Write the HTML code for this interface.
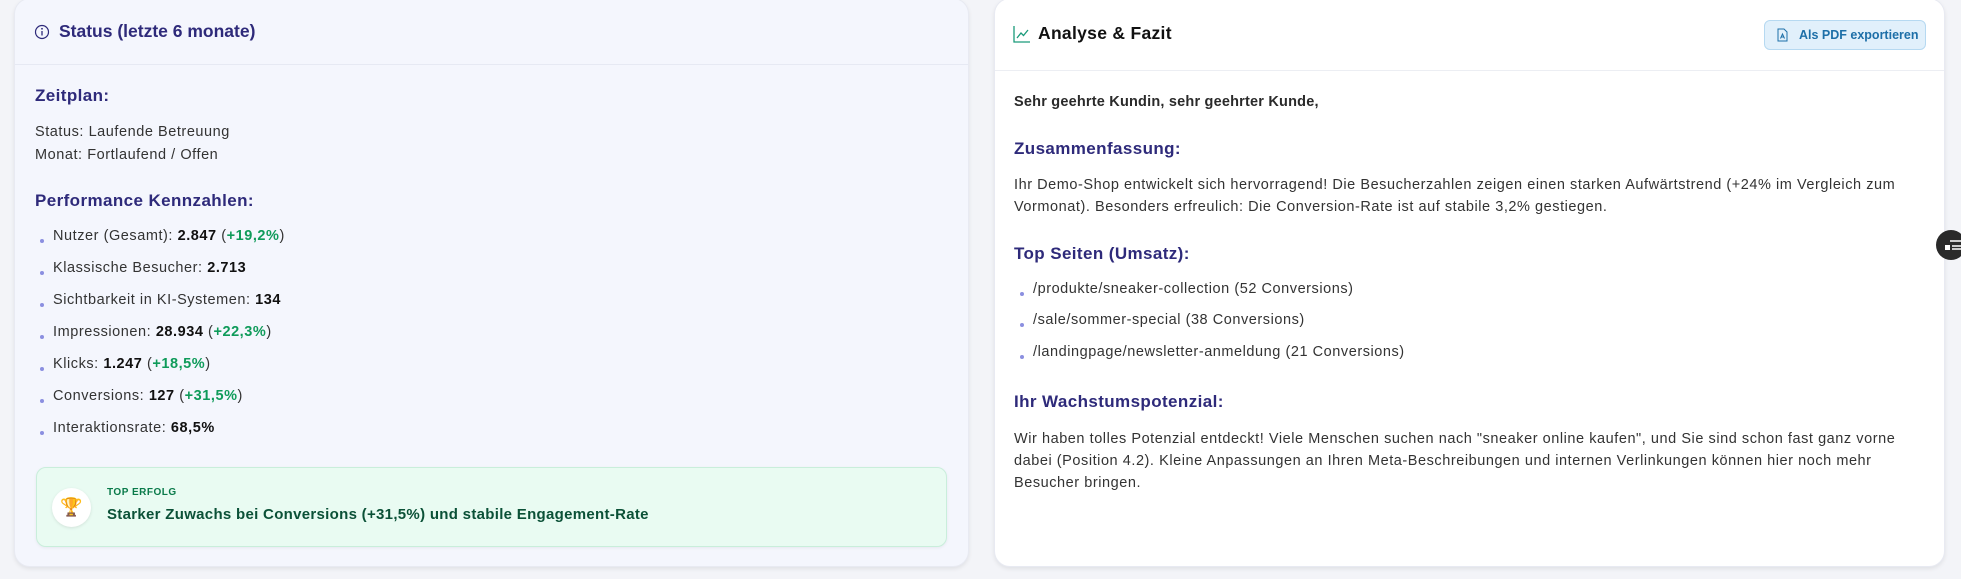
<!DOCTYPE html>
<html><head><meta charset="utf-8"><style>
*{margin:0;padding:0;box-sizing:border-box}
body{width:1961px;height:579px;background:#f3f4f8;font-family:"Liberation Sans",sans-serif;position:relative;overflow:hidden;color:#333}
.card{position:absolute;border-radius:16px;box-shadow:0 2px 4px rgba(0,0,0,.08);border:1px solid #e8eaf2}
.a{position:absolute;white-space:nowrap;line-height:20px}
.h{font-weight:bold;color:#2e2a7a;font-size:17px;letter-spacing:.4px}
.t{font-size:14.5px;letter-spacing:.55px;color:#333}
.b{font-weight:bold;color:#111}
.g{font-weight:bold;color:#0f9b5a}
.dot{position:absolute;width:4px;height:4px;border-radius:50%;background:#8b8fe0}
</style></head><body>
<div class="card" style="left:14px;top:-2px;width:955px;height:569px;background:#f4f6fd"></div>
<div style="position:absolute;left:15px;top:64px;width:953px;height:1px;background:#e6e9f3"></div>
<svg style="position:absolute;left:34px;top:24px" width="16" height="16" viewBox="0 0 16 16"><circle cx="8" cy="8" r="6.5" fill="none" stroke="#2e2a7a" stroke-width="1.2"/><line x1="8" y1="7" x2="8" y2="11.5" stroke="#2e2a7a" stroke-width="1.3"/><circle cx="8" cy="4.8" r=".9" fill="#2e2a7a"/></svg>
<div class="a h" style="left:59px;top:21px;font-size:17.5px;letter-spacing:0">Status (letzte 6 monate)</div>
<div class="a h" style="left:35px;top:86px">Zeitplan:</div>
<div class="a t" style="left:35px;top:122px">Status: Laufende Betreuung</div>
<div class="a t" style="left:35px;top:145px">Monat: Fortlaufend / Offen</div>
<div class="a h" style="left:35px;top:191px">Performance Kennzahlen:</div>
<div class="dot" style="left:40px;top:239px"></div><div class="a t" style="left:53px;top:226px">Nutzer (Gesamt): <span class="b">2.847</span> (<span class="g">+19,2%</span>)</div>
<div class="dot" style="left:40px;top:271px"></div><div class="a t" style="left:53px;top:258px">Klassische Besucher: <span class="b">2.713</span></div>
<div class="dot" style="left:40px;top:303px"></div><div class="a t" style="left:53px;top:290px">Sichtbarkeit in KI-Systemen: <span class="b">134</span></div>
<div class="dot" style="left:40px;top:335px"></div><div class="a t" style="left:53px;top:322px">Impressionen: <span class="b">28.934</span> (<span class="g">+22,3%</span>)</div>
<div class="dot" style="left:40px;top:367px"></div><div class="a t" style="left:53px;top:354px">Klicks: <span class="b">1.247</span> (<span class="g">+18,5%</span>)</div>
<div class="dot" style="left:40px;top:399px"></div><div class="a t" style="left:53px;top:386px">Conversions: <span class="b">127</span> (<span class="g">+31,5%</span>)</div>
<div class="dot" style="left:40px;top:431px"></div><div class="a t" style="left:53px;top:418px">Interaktionsrate: <span class="b">68,5%</span></div>
<div style="position:absolute;left:36px;top:467px;width:911px;height:80px;background:#e9fbf2;border:1px solid #c9eedb;border-radius:10px;box-shadow:0 1px 3px rgba(0,0,0,.06)"></div>
<div style="position:absolute;left:52px;top:488px;width:39px;height:39px;border-radius:50%;background:#fff;box-shadow:0 1px 3px rgba(0,0,0,.1);text-align:center;line-height:39px;font-size:18px;color:#c8901a">🏆</div>
<div class="a" style="left:107px;top:483px;font-size:10px;font-weight:bold;color:#0a7a4a;letter-spacing:.5px">TOP ERFOLG</div>
<div class="a" style="left:107px;top:505px;font-size:15px;font-weight:bold;color:#0b5137;letter-spacing:.3px">Starker Zuwachs bei Conversions (+31,5%) und stabile Engagement-Rate</div>

<div class="card" style="left:994px;top:-2px;width:951px;height:569px;background:#fff"></div>
<div style="position:absolute;left:995px;top:70px;width:949px;height:1px;background:#eceef3"></div>
<svg style="position:absolute;left:1013px;top:25px" width="18" height="18" viewBox="0 0 18 18" fill="none" stroke="#1a9a7a" stroke-width="1.3"><path d="M1 1V17H17"/><path d="M4 13L8 8L10.5 10.5L15 5"/></svg>
<div class="a" style="left:1038px;top:23px;font-size:17.5px;font-weight:bold;color:#111;letter-spacing:.3px">Analyse &amp; Fazit</div>
<div style="position:absolute;left:1764px;top:20px;width:162px;height:30px;background:#e1f0fb;border:1px solid #b6d9f1;border-radius:6px"></div>
<svg style="position:absolute;left:1777px;top:28px" width="11" height="14" viewBox="0 0 11 14" fill="none" stroke="#1d6fa8" stroke-width="1"><path d="M1 1H7L10 4V13H1Z"/><path d="M3.5 10.5L5.5 6L7.5 10.5M4.3 9H6.7"/></svg>
<div class="a" style="left:1799px;top:25px;font-size:12.5px;color:#1d6fa8;font-weight:bold">Als PDF exportieren</div>
<div class="a t" style="left:1014px;top:92px;font-weight:bold;color:#2a2a2a;letter-spacing:.2px">Sehr geehrte Kundin, sehr geehrter Kunde,</div>
<div class="a h" style="left:1014px;top:139px">Zusammenfassung:</div>
<div class="a t" style="left:1014px;top:174px;line-height:22px">Ihr Demo-Shop entwickelt sich hervorragend! Die Besucherzahlen zeigen einen starken Aufwärtstrend (+24% im Vergleich zum<br>Vormonat). Besonders erfreulich: Die Conversion-Rate ist auf stabile 3,2% gestiegen.</div>
<div class="a h" style="left:1014px;top:244px">Top Seiten (Umsatz):</div>
<div class="dot" style="left:1020px;top:292px"></div><div class="a t" style="left:1033px;top:279px">/produkte/sneaker-collection (52 Conversions)</div>
<div class="dot" style="left:1020px;top:323px"></div><div class="a t" style="left:1033px;top:310px">/sale/sommer-special (38 Conversions)</div>
<div class="dot" style="left:1020px;top:355px"></div><div class="a t" style="left:1033px;top:342px">/landingpage/newsletter-anmeldung (21 Conversions)</div>
<div class="a h" style="left:1014px;top:392px">Ihr Wachstumspotenzial:</div>
<div class="a t" style="left:1014px;top:428px;line-height:22px">Wir haben tolles Potenzial entdeckt! Viele Menschen suchen nach "sneaker online kaufen", und Sie sind schon fast ganz vorne<br>dabei (Position 4.2). Kleine Anpassungen an Ihren Meta-Beschreibungen und internen Verlinkungen können hier noch mehr<br>Besucher bringen.</div>
<div style="position:absolute;left:1936px;top:230px;width:30px;height:30px;border-radius:50%;background:#2a2a2a"></div>
<svg style="position:absolute;left:1944px;top:238px" width="17" height="14" viewBox="0 0 17 14" stroke="#fff" stroke-width="1.5" fill="none"><path d="M6 3H17M8 8H17M8 11H17"/><rect x="1" y="7" width="5" height="5" fill="#fff" stroke="none"/></svg>
</body></html>
